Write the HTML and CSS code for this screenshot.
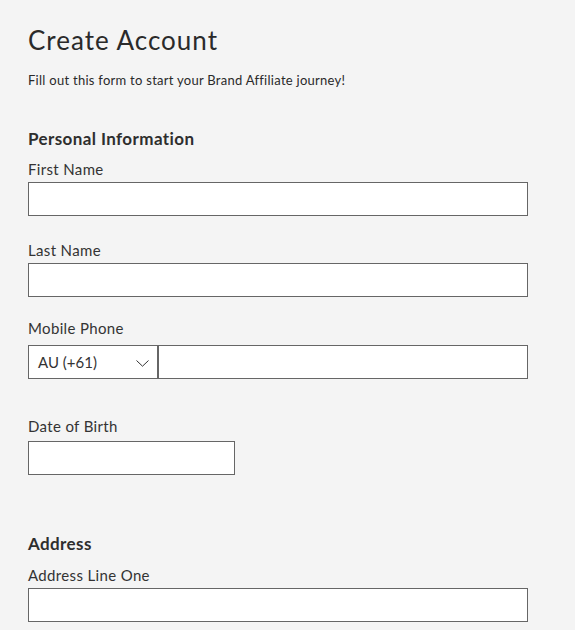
FILE: index.html
```html
<!DOCTYPE html>
<html lang="en">
<head>
<meta charset="utf-8">
<title>Create Account</title>
<link rel="stylesheet" href="styles.css">
</head>
<body>
<main class="page">
  <h1 class="title">Create Account</h1>
  <p class="intro">Fill out this form to start your Brand Affiliate journey!</p>

  <section class="section section-personal">
    <h2 class="section-title">Personal Information</h2>
    <div class="field field-first">
      <label class="label">First Name</label>
      <div class="input"></div>
    </div>
    <div class="field field-last">
      <label class="label">Last Name</label>
      <div class="input"></div>
    </div>
    <div class="field field-phone">
      <label class="label">Mobile Phone</label>
      <div class="phone-row">
        <div class="select">
          <span class="select-value">AU (+61)</span>
          <svg class="chevron" width="13" height="7" viewBox="0 0 13 7"><path d="M0.5 0.5 L6.5 6.2 L12.5 0.5" fill="none" stroke="#333" stroke-width="1"/></svg>
        </div>
        <div class="input phone-input"></div>
      </div>
    </div>
    <div class="field field-dob">
      <label class="label">Date of Birth</label>
      <div class="input dob-input"></div>
    </div>
  </section>

  <section class="section section-address">
    <h2 class="section-title">Address</h2>
    <div class="field field-first">
      <label class="label">Address Line One</label>
      <div class="input"></div>
    </div>
  </section>
</main>
</body>
</html>
```

FILE: styles.css
```css
html, body {
  margin: 0;
  padding: 0;
  background: #f4f4f4;
}
body {
  font-family: "Lato", "Open Sans", sans-serif;
  color: #2b2b2b;
  overflow: hidden;
}
.page {
  width: 500px;
  padding: 0 0 0 28px;
}
.title {
  margin: 0;
  padding-top: 24px;
  font-size: 26px;
  line-height: 32px;
  font-weight: 400;
  letter-spacing: 1px;
  color: #2a2a2a;
}
.intro {
  margin: 16px 0 0;
  font-size: 13px;
  line-height: 16px;
  letter-spacing: 0.27px;
  color: #2a2a2a;
}
.section-personal {
  margin-top: 41px;
}
.section-address {
  margin-top: 59px;
}
.section-title {
  margin: 0;
  font-size: 17px;
  line-height: 20px;
  font-weight: 700;
  letter-spacing: 0.4px;
  color: #2e2e2e;
}
.section-address .field-first {
  margin-top: 12px;
}
.field {
  display: flex;
  flex-direction: column;
}
.field-first {
  margin-top: 11px;
}
.field-last {
  margin-top: 25px;
}
.field-phone {
  margin-top: 22px;
}
.field-dob {
  margin-top: 38px;
}
.label {
  font-size: 15px;
  line-height: 18px;
  letter-spacing: 0.35px;
  color: #333;
  margin-bottom: 4px;
}
.input {
  box-sizing: border-box;
  height: 34px;
  width: 500px;
  background: #fff;
  border: 1px solid #666;
}
.field-phone .label {
  margin-bottom: 8px;
}
.phone-row {
  display: flex;
  width: 500px;
}
.select {
  box-sizing: border-box;
  width: 130px;
  height: 34px;
  background: #fff;
  border: 1px solid #666;
  display: flex;
  align-items: center;
  justify-content: space-between;
  padding: 0 8px 0 9px;
  font-size: 15px;
  color: #333;
}
.chevron {
  display: block;
  margin-top: 2px;
}
.phone-input {
  flex: 1;
  width: auto;
}
.dob-input {
  width: 207px;
}
.field-dob .label {
  margin-bottom: 6px;
}
```
